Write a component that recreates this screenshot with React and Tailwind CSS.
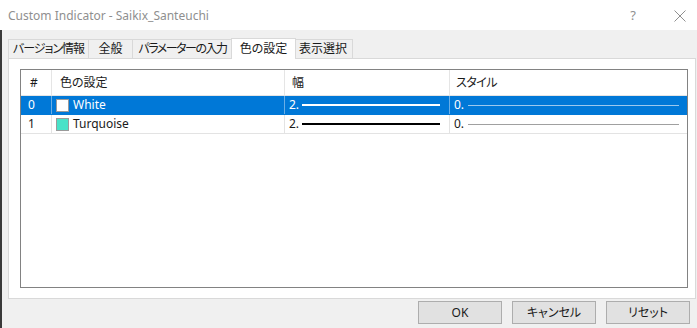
import React from "react";

const tabs = [
  { label: "バージョン情報", w: "w-[81px]", tr: "tracking-[-1px]" },
  { label: "全般", w: "w-[45px]", tr: "" },
  { label: "パラメーターの入力", w: "w-[101px]", tr: "tracking-[-1.5px]" },
  { label: "色の設定", w: "w-[65px]", tr: "", active: true },
  { label: "表示選択", w: "w-[60px]", tr: "" },
];

const rows = [
  { idx: 0, name: "White", swatch: "bg-white", selected: true },
  { idx: 1, name: "Turquoise", swatch: "bg-[#48e2c8]" },
];

const font = "font-['Noto_Sans','Noto_Sans_CJK_JP',sans-serif] [font-feature-settings:'palt']";

const App = () => {
  return (
    <div className={`w-[697px] h-[328px] flex flex-col bg-[#f0f0f0] text-[12px] text-[#1a1a1a] overflow-hidden ${font}`}>
      {/* title bar */}
      <div className="h-[30px] bg-white flex items-center pl-[8px] pt-[1px] text-[#8f8f8f] shrink-0">
        <span className="flex-1">Custom Indicator - Saikix_Santeuchi</span>
        <span className="w-[20px] text-center text-[13px] mr-[27px]">?</span>
        <span className="w-[20px] flex justify-center mr-[7px]">
          <svg width="12" height="12" viewBox="0 0 12 12">
            <path d="M0.5 0.5 L11.5 11.5 M11.5 0.5 L0.5 11.5" stroke="#8f8f8f" strokeWidth="1" />
          </svg>
        </span>
      </div>

      <div className="flex-1 flex flex-col border-l-2 border-[#3a3a3a]">
        {/* tabs */}
        <div className="flex items-end h-[28px] pl-[6px] pt-[7px] shrink-0">
          {tabs.map((t) =>
            t.active ? (
              <div
                key={t.label}
                className={`${t.w} h-[21px] -mx-[2px] mb-[-1px] z-10 bg-white border border-b-0 border-[#d9d9d9] flex items-center justify-center pb-[1px] whitespace-nowrap ${t.tr}`}
              >
                {t.label}
              </div>
            ) : (
              <div
                key={t.label}
                className={`${t.w} h-[19px] bg-[#f0f0f0] border border-b-0 border-[#d9d9d9] -ml-px first:ml-0 flex items-center justify-center whitespace-nowrap ${t.tr}`}
              >
                {t.label}
              </div>
            )
          )}
        </div>

        {/* panel */}
        <div className="ml-[6px] mr-[1px] h-[241px] bg-white border border-[#d9d9d9] pl-[11px] pr-[7px] pt-[10px] pb-[10px] flex">
          <div className="flex-1 border border-[#828282] flex flex-col">
            <div className="flex h-[26px] items-center border-b border-[#e5e5e5]">
              <div className="w-[30px] pl-[9px] h-full flex items-center">#</div>
              <div className="w-[233px] pl-[8px] h-full flex items-center border-l border-[#e5e5e5]">色の設定</div>
              <div className="w-[165px] pl-[7px] h-full flex items-center border-l border-[#e5e5e5]">幅</div>
              <div className="flex-1 pl-[6px] h-full flex items-center border-l border-[#e5e5e5] tracking-[-0.5px]">スタイル</div>
            </div>
            {rows.map((r) => (
              <div
                key={r.idx}
                className={`flex h-[19px] items-center border-b ${
                  r.selected ? "bg-[#0078d7] text-white border-[#0078d7]" : "border-[#e3e3e3]"
                }`}
              >
                <div className="w-[30px] pl-[7px] h-full flex items-center">{r.idx}</div>
                <div className={`w-[233px] pl-[4px] h-full flex items-center gap-[4px] border-l ${r.selected ? "border-[#6aaee6]" : "border-[#e3e3e3]"}`}>
                  <span className={`w-[13px] h-[13px] border border-[#9a9a9a] ${r.swatch}`} />
                  <span>{r.name}</span>
                </div>
                <div className={`w-[165px] pl-[4px] pr-[9px] h-full flex items-center gap-[3px] border-l ${r.selected ? "border-[#6aaee6]" : "border-[#e3e3e3]"}`}>
                  <span>2.</span>
                  <span className={`flex-1 h-[2px] ${r.selected ? "bg-white" : "bg-black"}`} />
                </div>
                <div className={`flex-1 pl-[4px] pr-[8px] h-full flex items-center gap-[4px] border-l ${r.selected ? "border-[#6aaee6]" : "border-[#e3e3e3]"}`}>
                  <span>0.</span>
                  <span className={`flex-1 h-px ${r.selected ? "bg-[#9cc8ee]" : "bg-[#a0a0a0]"}`} />
                </div>
              </div>
            ))}
          </div>
        </div>

        {/* buttons */}
        <div className="flex justify-end gap-[10px] pt-[2px] pr-[7px]">
          {["OK", "キャンセル", "リセット"].map((b) => (
            <button
              key={b}
              className="w-[84px] h-[23px] bg-[#e1e1e1] border border-[#adadad] flex items-center justify-center"
            >
              {b}
            </button>
          ))}
        </div>
      </div>
    </div>
  );
};

export default App;
